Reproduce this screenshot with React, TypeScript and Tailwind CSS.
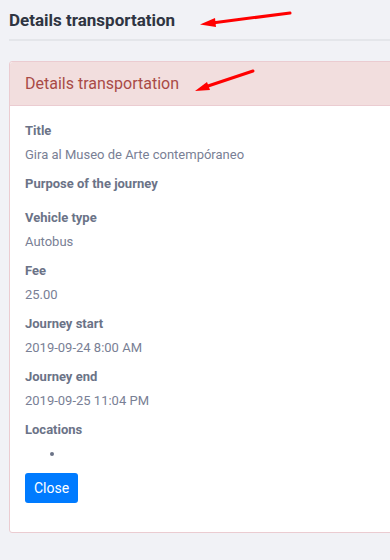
export default function App() {
  const items: { label: string; value?: string }[] = [
    { label: "Title", value: "Gira al Museo de Arte contempóraneo" },
    { label: "Purpose of the journey", value: "" },
    { label: "Vehicle type", value: "Autobus" },
    { label: "Fee", value: "25.00" },
    { label: "Journey start", value: "2019-09-24 8:00 AM" },
    { label: "Journey end", value: "2019-09-25 11:04 PM" },
  ];

  return (
    <div
      className="relative w-[390px] h-[560px] overflow-hidden bg-[#f1f2f6]"
      style={{ fontFamily: "Roboto, 'Liberation Sans', sans-serif" }}
    >
      {/* Page header */}
      <div className="pl-[9px] pt-[9px]">
        <h1 className="text-[17px] leading-[22px] font-bold text-[#2f3542] pb-[8px] border-b-2 border-[#e4e6ea]">
          Details transportation
        </h1>
      </div>

      {/* Card */}
      <div className="ml-[9px] mt-[20px] w-[420px] bg-white border border-[#ebccd1] rounded-[3px]">
        <div className="h-[44px] flex items-center px-[15px] bg-[#f2dede] border-b border-[#ebccd1] rounded-t-[3px]">
          <span className="text-[16px] text-[#a94a46]">Details transportation</span>
        </div>
        <div className="px-[15px] pt-[15px] pb-[29px] text-[13px] leading-[20px]">
          {items.map((it) => (
            <div key={it.label} className="mb-[9px]">
              <div className="font-bold text-[#6b7387]">{it.label}</div>
              <div className="mt-[4px] text-[#798095] min-h-[1px]">{it.value}</div>
            </div>
          ))}
          <div className="font-bold text-[#6b7387]">Locations</div>
          <ul className="list-disc pl-[40px] mt-[4px] text-[#6b7387]">
            <li className="h-[20px]"></li>
          </ul>
          <button className="mt-[9px] h-[30px] px-[9px] bg-[#007bff] text-white text-[14px] rounded-[3px]">
            Close
          </button>
        </div>
      </div>

      {/* Red annotation arrows */}
      <svg className="absolute inset-0 pointer-events-none" width="390" height="560">
        <line x1="290" y1="13" x2="212" y2="23" stroke="#ff0000" strokeWidth="3" strokeLinecap="round" />
        <polygon points="200,24.5 215,18 216,27" fill="#ff0000" />
        <line x1="253" y1="71" x2="205" y2="87" stroke="#ff0000" strokeWidth="3" strokeLinecap="round" />
        <polygon points="195,91 207,82 210,90" fill="#ff0000" />
      </svg>
    </div>
  );
}
